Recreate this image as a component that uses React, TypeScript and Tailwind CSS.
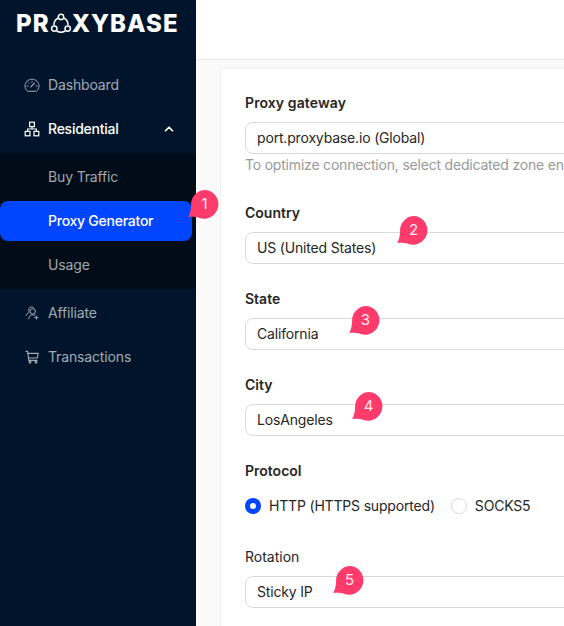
import { ChevronUp } from 'lucide-react';
import type { ReactNode } from 'react';

function LogoMark() {
  return (
    <svg viewBox="0 0 22 22" className="h-[22px] w-[22px] shrink-0" fill="none" stroke="white" strokeWidth="1.5">
      <path d="M8.4 5 C5.6 6.2 3.9 8.9 3.9 12 M13.6 5 C16.4 6.2 18.1 8.9 18.1 12 M6.6 18 C9.2 19.4 12.8 19.4 15.4 18" />
      <circle cx="11" cy="3.9" r="2.7" />
      <circle cx="4.3" cy="15.6" r="2.7" />
      <circle cx="17.7" cy="15.6" r="2.7" />
    </svg>
  );
}

function GaugeIcon() {
  return (
    <svg viewBox="0 0 16 16" className="h-4 w-4" fill="none" stroke="currentColor" strokeWidth="1" strokeLinecap="round">
      <path d="M3.4 14 C1.9 12.8 1 11 1 9 C1 5.1 4.1 2.2 8 2.2 C11.9 2.2 15 5.1 15 9 C15 11 14.1 12.8 12.6 14 Z" />
      <path d="M6.9 9.9 L10.4 6.2" strokeWidth="1.2" />
      <path d="M4 9 H3 M13 9 H12 M8 5.2 V4.2 M5.2 6.2 L4.6 5.6" />
    </svg>
  );
}

function NetworkIcon() {
  return (
    <svg viewBox="0 0 16 16" className="h-4 w-4" fill="none" stroke="currentColor" strokeWidth="1.2">
      <rect x="5.6" y="1.2" width="4.8" height="4.4" />
      <rect x="1.2" y="10.4" width="4.8" height="4.4" />
      <rect x="10" y="10.4" width="4.8" height="4.4" />
      <path d="M8 5.6 V8 M3.6 10.4 V8 H12.4 V10.4" />
    </svg>
  );
}

function AffiliateIcon() {
  return (
    <svg viewBox="0 0 16 16" className="h-4 w-4" fill="none" stroke="currentColor" strokeWidth="1" strokeLinecap="round">
      <path d="M5.4 7.2 C4 5.8 4.4 2.4 7 2 C8.2 1.8 9.2 2.2 9.8 3.2" />
      <path d="M4.4 7.6 C3.4 8.2 2.6 9.2 2.2 10.4" />
      <circle cx="8.8" cy="6.4" r="2.7" />
      <path d="M4.6 13.8 C5 11.4 6.6 9.8 8.8 9.8 C9.6 9.8 10.4 10 11 10.4" />
      <path d="M12.4 11 V14.2 M10.8 12.6 H14" />
    </svg>
  );
}

function CartIcon() {
  return (
    <svg viewBox="0 0 16 16" className="h-4 w-4" fill="none" stroke="currentColor" strokeWidth="1.1" strokeLinecap="round">
      <path d="M2 2.4 H3.6 L4.8 11.4 H13" />
      <path d="M3.9 4.4 H14.2 L13.3 9 H4.6" />
      <circle cx="6" cy="13.2" r="0.9" />
      <circle cx="12" cy="13.2" r="0.9" />
    </svg>
  );
}

function NavItem({ icon, label, active, trailing }: { icon: ReactNode; label: string; active?: boolean; trailing?: ReactNode }) {
  return (
    <div className={`flex h-11 items-center pl-6 pr-5 text-sm ${active ? 'font-medium tracking-[-0.25px] text-white' : 'tracking-[-0.15px] text-[#a3abb5]'}`}>
      <span className="mr-2 flex w-4 justify-center">{icon}</span>
      <span>{label}</span>
      {trailing && <span className="ml-auto">{trailing}</span>}
    </div>
  );
}

function SubItem({ label, active }: { label: string; active?: boolean }) {
  return (
    <div className="flex h-11 items-center">
      <div className={`flex h-10 w-[192px] items-center rounded-lg pl-12 text-sm ${active ? 'bg-[#0045ff] font-medium tracking-[-0.25px] text-white' : 'tracking-[-0.15px] text-[#a3a6aa]'}`}>
        {label}
      </div>
    </div>
  );
}

function Field({ label, value, plain }: { label: string; value: string; plain?: boolean }) {
  return (
    <div className="mb-6">
      <div className={`mb-2 h-[22px] text-sm leading-[22px] ${plain ? 'font-normal' : 'font-semibold'}`}>{label}</div>
      <Input value={value} />
    </div>
  );
}

function Input({ value }: { value: string }) {
  return (
    <div className="flex h-8 w-[500px] items-center rounded-lg border border-[#d9d9d9] bg-white px-[11px] text-sm tracking-[-0.17px]">{value}</div>
  );
}

function Radio({ label, checked }: { label: string; checked?: boolean }) {
  return (
    <div className="flex items-center">
      {checked ? (
        <span className="flex h-4 w-4 items-center justify-center rounded-full bg-[#0045ff]">
          <span className="h-1.5 w-1.5 rounded-full bg-white" />
        </span>
      ) : (
        <span className="h-4 w-4 rounded-full border border-[#d9d9d9] bg-white" />
      )}
      <span className="ml-2 text-sm tracking-[-0.18px]">{label}</span>
    </div>
  );
}

// callout markers lie over the page, placed by the tail tip
function Badge({ n, className }: { n: number; className: string }) {
  return (
    <div className={`absolute h-[29px] w-[32px] ${className}`}>
      <svg viewBox="0 0 32 29" className="absolute inset-0 h-full w-full">
        <path d="M17.5 0 A14.4 14.4 0 1 1 11.5 28 C8 26.6 4 26.7 0 26.8 C2 24.4 3 20 3.1 15 A14.4 14.4 0 0 1 17.5 0 Z" fill="#ff3b6b" />
      </svg>
      <span className="absolute left-[2px] top-0 flex h-[29px] w-[29px] items-center justify-center text-[15px] text-[#ffe9ef]">{n}</span>
    </div>
  );
}

export default function App() {
  return (
    <div className="relative flex h-[626px] w-[564px] overflow-hidden bg-[#fafafa] font-['Inter',sans-serif] text-[#262626]">
      <aside className="flex h-full w-[196px] shrink-0 flex-col bg-[#00152b]">
        <div className="flex h-[63px] items-start pl-4 pt-[9px] text-[24px] font-extrabold leading-[29px] tracking-[1.05px] text-white">
          <span>PR</span>
          <span className="mt-[4px]"><LogoMark /></span>
          <span>XYBASE</span>
        </div>
        <NavItem icon={<GaugeIcon />} label="Dashboard" />
        <NavItem icon={<NetworkIcon />} label="Residential" active trailing={<ChevronUp size={14} strokeWidth={3} />} />
        <div className="mt-[2px] bg-[#000c18] py-[2px]">
          <SubItem label="Buy Traffic" />
          <SubItem label="Proxy Generator" active />
          <SubItem label="Usage" />
        </div>
        <div className="mt-[2px]">
          <NavItem icon={<AffiliateIcon />} label="Affiliate" />
          <NavItem icon={<CartIcon />} label="Transactions" />
        </div>
      </aside>

      <div className="min-w-0 flex-1">
        <header className="h-[60px] border-b border-[#e5e5e5] bg-white" />
        <main className="pl-6 pt-2">
          <div className="h-[600px] border-l border-t border-[#f0f0f0] bg-white pl-6 pt-[23px]">
            <div className="mb-2 h-[22px] text-sm font-semibold leading-[22px] tracking-[0.1px]">Proxy gateway</div>
            <Input value="port.proxybase.io (Global)" />
            <div className="mb-[26px] h-[22px] whitespace-nowrap text-sm leading-[22px] tracking-[-0.2px] text-[#999999]">
              To optimize connection, select dedicated zone endpoints
            </div>
            <Field label="Country" value="US (United States)" />
            <Field label="State" value="California" />
            <Field label="City" value="LosAngeles" />
            <div className="mb-2 h-[22px] text-sm font-semibold leading-[22px]">Protocol</div>
            <div className="mb-6 flex h-8 items-center gap-4">
              <Radio label="HTTP (HTTPS supported)" checked />
              <Radio label="SOCKS5" />
            </div>
            <Field label="Rotation" value="Sticky IP" plain />
          </div>
        </main>
      </div>

      <Badge n={1} className="left-[188px] top-[190px]" />
      <Badge n={2} className="left-[397px] top-[216px]" />
      <Badge n={3} className="left-[349px] top-[306px]" />
      <Badge n={4} className="left-[352px] top-[392px]" />
      <Badge n={5} className="left-[333px] top-[566px]" />
    </div>
  );
}
